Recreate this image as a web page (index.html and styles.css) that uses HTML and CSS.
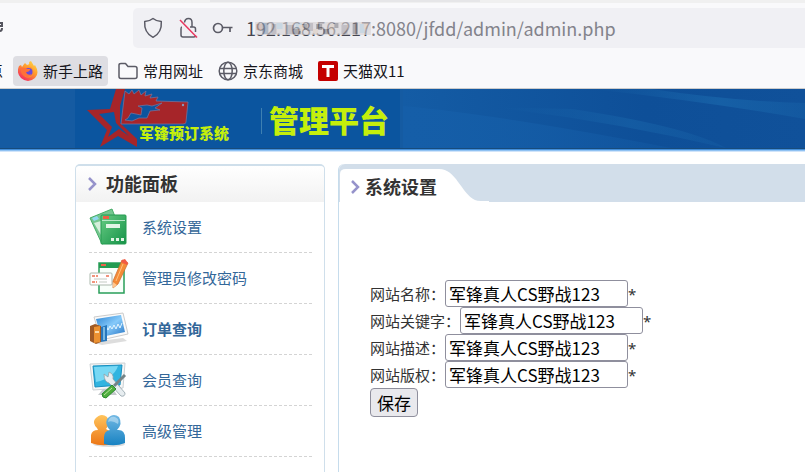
FILE: index.html
```html
<!DOCTYPE html>
<html lang="zh-CN">
<head>
<meta charset="utf-8">
<title>管理平台</title>
<meta name="viewport" content="width=device-width, initial-scale=1">
<link rel="stylesheet" href="styles.css">
</head>
<body>
<header class="browser">
  <div class="tabstrip"><div class="active-tab"></div></div>
  <div class="toolbar">
    <svg class="reload" viewBox="0 0 4 16" aria-hidden="true"><path d="M0 3H2V6H0M0 11Q2 11 2 8" fill="none" stroke="#55555e" stroke-width="2"/></svg>
    <div class="address">
      <svg class="ico-shield" width="20" height="22" viewBox="0 0 20 22" fill="none" stroke="#5b5b66" stroke-width="1.5" stroke-linejoin="round"><path d="M10 1.5Q13 4 18.3 4.6C18.8 11.500 16.500 17 10 20.300C3.500 17 1.200 11.500 1.700 4.600Q7 4 10 1.500Z"/></svg>
      <svg class="ico-lock" width="20" height="22" viewBox="0 0 20 22" fill="none" stroke="#5b5b66" stroke-width="1.500"><path d="M6.500 5.500Q7 1.500 10.500 1.500Q14 1.500 14 5.500V9.500M4 10Q3 10 3 12V18Q3 20 5 20H16Q17.500 20 17.500 18.500M12 10H15.500Q17.500 10 17.500 12V15"/><path d="M2 3L19 20.500" stroke="#e8375f"/></svg>
      <svg class="ico-key" width="22" height="14" viewBox="0 0 22 14" fill="none" stroke="#5b5b66" stroke-width="1.700"><circle cx="6" cy="7" r="4.500"/><path d="M10.500 6.500H20.500M18 6.500V11"/></svg>
      <span class="url"><span class="host">192.168.56.217<svg class="mosaic" viewBox="0 0 123 18" preserveAspectRatio="none" aria-hidden="true"><g opacity=".65"><path fill="#d7d3d6" d="M9 2h114v13H9z"/><path fill="#c8aaa1" d="M10 4h6v6h-6z"/><path fill="#8c9bb0" d="M16 3h6v11h-6z"/><path fill="#aaa6ac" d="M25 4h5v10h-5zM40 5h7v9h-7zM60 3h6v8h-6zM94 5h6v9h-6z"/><path fill="#b5cad9" d="M30 3h6v6h-6zM49 3h6v6h-6zM112 4h5v9h-5z"/><path fill="#87858c" d="M46 9h8v5h-8zM55 4h5v6h-5zM69 4h6v6h-6zM76 9h6v5h-6zM86 3h5v5h-5zM105 3h5v11h-5z"/><path fill="#d9c9bd" d="M52 5h5v6h-5zM66 9h5v5h-5zM82 4h5v6h-5zM116 3h4v6h-4z"/></g></svg></span>:8080/jfdd/admin/admin.php</span>
    </div>
  </div>
  <nav class="bookmarks" aria-label="书签">
    <a class="cut" href="#">点</a>
    <a class="bookmark selected" href="#"><svg width="20" height="20" viewBox="0 0 20 20"><defs><linearGradient id="fox" x1="1" y1="0" x2=".3" y2="1"><stop stop-color="#ffe54a"/><stop offset=".5" stop-color="#ff982d"/><stop offset="1" stop-color="#f52860"/></linearGradient></defs><path fill="url(#fox)" d="M3 4L4 6Q6 3 7 2L9 4Q12 4 11 1L13 0L16 5L17 4Q22 12 17 17Q10 23 3 17Q-2 12 1 5Z"/><circle cx="10" cy="11" r="5.500" fill="#ff9231"/><circle cx="10.500" cy="11" r="4" fill="#674cdb"/><path fill="#ff7139" d="M3 7Q8 6 9 8L12 8Q12 11 8 11Q9 15 14 13Q11 18 6 15Q2 12 3 7Z"/></svg>新手上路</a>
    <a class="bookmark" href="#"><svg width="20" height="20" viewBox="0 0 20 20" fill="none" stroke="#5b5b66" stroke-width="1.500" stroke-linejoin="round"><path d="M1 4Q1 2.500 3 2.500H7.500L10 5.500H17Q19 5.500 19 7.500V15.500Q19 17.500 17 17.500H3Q1 17.500 1 15.500Z"/></svg>常用网址</a>
    <a class="bookmark" href="#"><svg width="20" height="20" viewBox="0 0 20 20" fill="none" stroke="#5b5b66" stroke-width="1.500"><circle cx="10" cy="10" r="8.800"/><ellipse cx="10" cy="10" rx="4.200" ry="8.800"/><path d="M1.500 7.500H18.500M1.500 12.500H18.500"/></svg>京东商城</a>
    <a class="bookmark" href="#"><svg width="20" height="20" viewBox="0 0 20 20"><rect width="20" height="20" rx="2" fill="#c40000"/><path fill="#fff" d="M4 4H16V7H11.500V16H8.500V7H4Z"/></svg>天猫双11</a>
  </nav>
</header>

<div class="banner">
  <svg class="waves" viewBox="0 0 405 59" preserveAspectRatio="none" aria-hidden="true">
    <defs><linearGradient id="w1"><stop stop-color="#145ca5"/><stop offset=".6" stop-color="#0e4f98"/><stop offset="1" stop-color="#10519a"/></linearGradient><linearGradient id="w2"><stop stop-color="#1966ab" stop-opacity="0"/><stop offset=".6" stop-color="#1966ab"/><stop offset="1" stop-color="#1966ab" stop-opacity=".5"/></linearGradient><linearGradient id="w3"><stop stop-color="#155ea8"/><stop offset="1" stop-color="#155ea8" stop-opacity=".3"/></linearGradient></defs>
    <path fill="url(#w1)" d="M0 0H405V59H0Z"/>
    <path fill="url(#w3)" d="M0 17Q100 26 270 59H0Z"/>
    <path fill="url(#w2)" opacity=".5" d="M90 18Q210 32 325 59Q285 37 170 20Z"/>
    <path fill="url(#w2)" opacity=".7" d="M190 0Q300 12 405 30V14Q330 12 250 0Z"/>
  </svg>
  <div class="brand">
    <svg class="star" width="106" height="59" viewBox="0 0 106 59" aria-hidden="true"><path fill="#a62529" fill-rule="evenodd" d="M31 0H40L35 17V34L52 50V58L33 47L15 58L22 41L2 21L25 20ZM29 23L14 25L27 38L23 48L34 40L44 47L31 34Z"/><path fill="#a62529" stroke="#7777a0" stroke-width=".7" d="M40 2L44 5L47 1L49 5L54 1L56 6L61 2L60 7L67 5L65 9L73 8L71 12L103 13L101 33Q101 35 98 35H36Z"/><path fill="#0c559f" stroke="#7777a0" stroke-width=".7" d="M43 29L46 24L56 26L57 19L53 17L62 16L67 17L77 14L70 19L75 21L65 22L62 29L54 29L47 32L40 31Z"/><circle cx="98" cy="16" r="1.200" fill="#8797bb"/></svg>
    <strong class="brand-name">军锋预订系统</strong>
    <strong class="platform">管理平台</strong>
  </div>
</div>
<div class="banner-edge"></div>

<div class="page">
  <aside class="sidebar">
    <h2 class="side-title"><svg class="chevron" width="9" height="14" viewBox="0 0 9 14"><path d="M1 1L7 7L1 13" fill="none" stroke="#9693cb" stroke-width="2.500"/></svg>功能面板</h2>
    <ul class="menu">
      <li><a href="#"><svg width="40" height="40" viewBox="0 0 40 40"><defs><linearGradient id="g" x2="1" y2="1"><stop stop-color="#67cb83"/><stop offset="1" stop-color="#159348"/></linearGradient></defs><path fill="#75c78f" stroke="#45ad68" d="M1 11L23 2L34 30L13 37Z"/><path fill="#91d8f0" d="M3 11L8 9L10 12L5 14Z"/><path fill="#d5efdb" d="M5 16L12 14V28Z"/><rect x="12" y="8" width="25" height="29" rx="1" fill="url(#g)" stroke="#259a50"/><path fill="#ef6045" d="M14 9h6v3h-6z"/><path stroke="#b7e6c6" d="M13 13.500H36"/><path fill="#e2f5e6" d="M17 17h14v4H17zM22 31h3v3h-3zM27 31h3v3h-3zM32 31h3v3h-3z"/></svg>系统设置</a></li>
      <li><a href="#"><svg width="40" height="40" viewBox="0 0 40 40"><path fill="#f8fffa" stroke="#299e59" stroke-width="1.500" d="M10 5H35V35H10Z"/><path fill="#249b51" d="M10 5H35V10H10Z"/><path fill="#ee604a" d="M12 6h5v2h-5z"/><rect x="1" y="15" width="22" height="12" rx="1" fill="#fff" stroke="#aab8ac"/><path stroke="#ed7153" stroke-width="1.500" stroke-dasharray="3 1" d="M3 18H9M17 18H21M3 24H8"/><path stroke="#c3cbc3" d="M5 21H18M10 24H18"/><path fill="#f58c37" stroke="#c76b2f" stroke-width=".7" d="M33 2L39 5L29 26L24 30L24 23Z"/><path fill="#ffc78e" d="M24 24L28 27L24 30Z"/><path stroke="#ffc47d" d="M34 6L27 23"/><path fill="#f15a45" d="M33 2L36 1L39 5L38 7L32 4Z"/></svg>管理员修改密码</a></li>
      <li><a class="current" href="#"><svg width="40" height="40" viewBox="0 0 40 40"><defs><linearGradient id="b" x2="1" y2="1"><stop stop-color="#2c84d3"/><stop offset=".5" stop-color="#86cafa"/><stop offset="1" stop-color="#2372c3"/></linearGradient></defs><path fill="#ddd" d="M2 33L34 29L38 32L13 36Z"/><path fill="#fafafa" stroke="#ccc" d="M5 8L34 4L39 25L12 31Z"/><path fill="url(#b)" d="M7 10L32 6L36 23L12 28Z"/><path fill="none" stroke="#e3f5ff" d="M17 17L19 21L21 17L23 20L25 16L27 20L29 15L31 19L33 14"/><path fill="#9f5a25" d="M1 17L6 15L12 17V33L7 35L1 32Z"/><path fill="#eb9131" d="M5 18L11 17V33L5 34Z"/><path fill="#fadaaa" d="M6 22h4v2H6z"/><path fill="#2777bd" d="M12 18L18 16V32L12 33Z"/><path fill="#79b7df" d="M14 18h2v13h-2z"/></svg>订单查询</a></li>
      <li><a href="#"><svg width="40" height="40" viewBox="0 0 40 40"><path fill="#f5f6f6" stroke="#ccd1d4" d="M1 4L36 3L34 28L4 30Z"/><path fill="#31b4e0" stroke="#198fbf" d="M4 6L33 5L31 25L6 27Z"/><path fill="#78d8f4" d="M5 7L29 6Q25 18 7 22Z"/><path fill="#c5c9cc" d="M14 29H24L28 35H9Z"/><path fill="#e7edf0" stroke="#91a1a8" stroke-width=".8" d="M15 14L19 17L20 12Q25 14 24 19L36 33Q36 37 32 36L20 23Q15 22 15 14Z"/><path stroke="#758487" stroke-width="3" d="M36 15L25 26"/><path fill="#50ad3f" stroke="#298c2d" d="M23 25L27 29L17 38Q13 38 13 34Z"/><path stroke="#b6e79b" d="M23 28L15 35"/></svg>会员查询</a></li>
      <li><a href="#"><svg width="40" height="40" viewBox="0 0 40 40"><defs><linearGradient id="o" y2="1" x2="0"><stop stop-color="#ffc45c"/><stop offset="1" stop-color="#ec7616"/></linearGradient><linearGradient id="u" y2="1" x2="0"><stop stop-color="#73b9e4"/><stop offset="1" stop-color="#1782c2"/></linearGradient></defs><ellipse cx="20" cy="33" rx="16" ry="3" fill="#ddd"/><path fill="url(#o)" d="M8 17Q3 12 6 8Q12 1 18 6Q22 12 17 18L24 22V33Q13 36 2 32V24Q3 19 9 19Z"/><path fill="url(#u)" d="M20 18Q16 13 18 8Q24 1 30 6Q34 13 28 19Q36 18 36 27V32Q26 36 15 33V26Q15 20 21 19Z"/><path fill="#d8edf9" opacity=".5" d="M19 11Q20 5 26 6Q31 8 29 13Q23 9 19 11Z"/></svg>高级管理</a></li>
    </ul>
  </aside>

  <main class="content">
    <div class="content-head">
      <svg class="tab-shape" width="150" height="38" viewBox="0 0 150 38" aria-hidden="true"><path fill="#fff" d="M1 38V10Q1 5 7 5H100C117 5 122 29 136 36Q138 37 142 37H150V38Z"/></svg>
      <h2 class="tab-title"><svg class="chevron" width="9" height="14" viewBox="0 0 9 14"><path d="M1 1L7 7L1 13" fill="none" stroke="#9693cb" stroke-width="2.500"/></svg>系统设置</h2>
    </div>
    <form class="settings">
      <div class="row"><label for="name">网站名称：</label><input id="name" type="text" value="军锋真人CS野战123"><span>*</span></div>
      <div class="row"><label for="keys">网站关键字：</label><input id="keys" type="text" value="军锋真人CS野战123"><span>*</span></div>
      <div class="row"><label for="desc">网站描述：</label><input id="desc" type="text" value="军锋真人CS野战123"><span>*</span></div>
      <div class="row"><label for="copy">网站版权：</label><input id="copy" type="text" value="军锋真人CS野战123"><span>*</span></div>
      <button type="button">保存</button>
    </form>
  </main>
</div>
</body>
</html>
```
FILE: styles.css
```css
* { box-sizing: border-box; }
body {
  margin: 0;
  min-height: 100vh;
  display: flex;
  flex-direction: column;
  background: #fff;
  color: #333;
  font: 15px/20px "Noto Sans", "Noto Sans CJK SC", sans-serif;
  overflow-x: hidden;
}
a { color: inherit; text-decoration: none; }
svg { display: block; flex-shrink: 0; }

.browser { background: #f9f9fb; border-bottom: 1px solid #ccc; }
.tabstrip { height: 3px; background: #f0f0f0; }
.active-tab { width: 270px; height: 2px; margin-left: 210px; background: #e6e6e8; }
.toolbar { display: flex; align-items: center; padding: 5px 0; }
.reload { width: 4px; height: 16px; margin-right: 129px; }
.address {
  flex: 1;
  display: flex;
  align-items: center;
  height: 40px;
  padding-left: 10px;
  border-radius: 5px 0 0 5px;
  background: #f0f0f4;
}
.ico-lock { margin-left: 15px; }
.ico-key { margin-left: 14px; }
.url { margin-left: 12px; font-family: "Noto Sans CJK SC", sans-serif; font-size: 18px; line-height: 24px; color: #83838b; white-space: nowrap; }
.host { position: relative; color: #45454f; }
.mosaic { position: absolute; left: 0; top: 5px; width: 100%; height: 18px; }
.bookmarks { display: flex; height: 35px; padding-top: 3px; color: #15141a; }
.cut { width: 3px; margin-right: 10px; line-height: 28px; direction: rtl; overflow: hidden; }
.bookmark {
  display: flex;
  align-items: center;
  gap: 5px;
  height: 30px;
  padding: 0 5px;
  margin-right: 5px;
  border-radius: 4px;
  font-family: "Noto Sans CJK SC", sans-serif;
  white-space: nowrap;
}
.bookmark.selected { background: #dedee3; }

.banner { position: relative; background: #155ba2; }
.waves { position: absolute; top: 0; right: 0; width: 50%; height: 100%; }
.brand {
  position: relative;
  display: flex;
  width: 325px;
  height: 59px;
  margin-left: 75px;
  background: #0b559f;
  color: #c5ef0c;
  white-space: nowrap;
}
.star { margin-left: 10px; }
.brand-name { margin: 34px 0 0 -52px; font-size: 15px; line-height: 20px; font-weight: 900; }
.platform {
  align-self: center;
  height: 26px;
  margin: 4px 0 0 32px;
  padding-left: 7px;
  border-left: 1px solid #3e80b2;
  font-size: 30px;
  line-height: 26px;
  font-weight: 900;
}
.banner-edge {
  height: 4px;
  background: linear-gradient(#174b7c 0 1px, #438ed9 1px 2px, #8fc1f2 2px 3px, #d0e4fa 3px);
}

.page { flex: 1; display: flex; gap: 13px; padding: 12px 0 0 75px; }
.sidebar { width: 250px; flex-shrink: 0; border: 1px solid #cfdfeb; border-top-width: 2px; border-bottom: 0; border-radius: 5px 5px 0 0; }
h2 { margin: 0; font-size: 18px; line-height: 36px; color: #333; }
.side-title { display: flex; align-items: center; gap: 9px; padding-left: 12px; border-radius: 4px 4px 0 0; background: linear-gradient(#fff, #f2f2f2); }
.menu { margin: 0; padding: 0 12px 0 13px; list-style: none; }
.menu li { border-bottom: 1px dashed #d4d4d4; }
.menu a { display: flex; align-items: center; gap: 13px; height: 50px; color: #336799; }
.menu .current { font-weight: bold; }

.content { flex: 1; border-left: 1px solid #c6dcec; border-radius: 6px 0 0 0; }
.content-head { position: relative; height: 38px; border-radius: 6px 0 0 0; background: #d2deea; }
.tab-shape { position: absolute; left: 0; top: 0; }
.tab-title { position: relative; display: flex; align-items: center; gap: 5px; padding: 5px 0 0 12px; }
.settings { padding: 78px 0 0 31px; }
.row { display: flex; align-items: center; height: 27px; white-space: nowrap; }
.row input {
  width: 183px;
  height: 27px;
  padding: 0 3px;
  border: 1px solid #8f8f9d;
  border-radius: 3px;
  background: #fff;
  color: #000;
  font: 17px/24px "Noto Sans CJK SC", sans-serif;
}
.settings button {
  display: block;
  height: 29px;
  padding: 0 6px;
  border: 1px solid #8f8f9d;
  border-radius: 4px;
  background: #e9e9ed;
  color: #000;
  font: 17px/24px "Noto Sans CJK SC", sans-serif;
}
```
